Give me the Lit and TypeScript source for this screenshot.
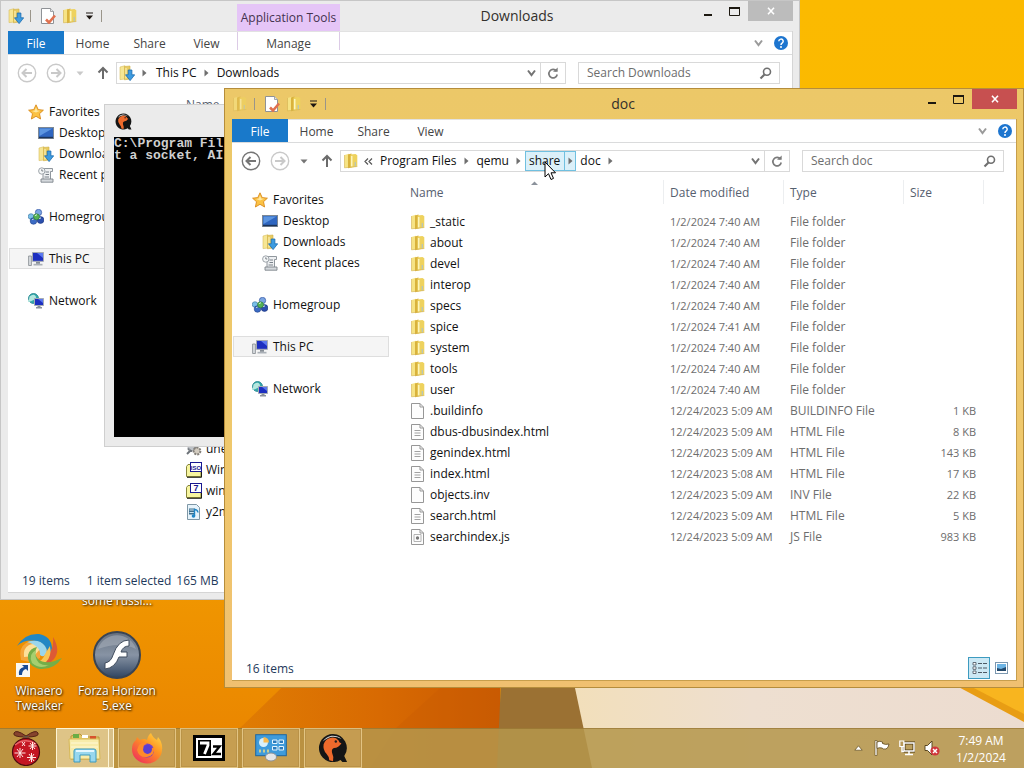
import { LitElement, html, svg, css, nothing, TemplateResult } from "lit";
import { customElement, property } from "lit/decorators.js";
import { classMap } from "lit/directives/class-map.js";

/* ---------- icons ---------- */

const folder = (s = 16) => html`<svg width=${s} height=${s} viewBox="0 0 16 16" aria-hidden="true">
  <path d="M1.500 2 6 .8v13.700l-4.500.3z" fill="#f6e384"/>
  <path d="M5 1.500 8.500.6v14L5 15.300z" fill="#d9b23c"/>
  <path d="M7.500 1.600 12.500 1l1.800 1.200V13.500l-6.800 1.200z" fill="#eed25e"/>
  <path d="M8.700 3v10.500" stroke="#fdf5bb" stroke-width="1.600"/>
  <path d="M12.300 9v4.500" stroke="#b4c4be" stroke-width="1.200"/>
  <path d="M1.500 2v12.800L14.300 13.500" fill="none" stroke="#d3b250" stroke-width=".6"/>
</svg>`;

const downloadFolder = html`<svg width="16" height="16" viewBox="0 0 16 16" aria-hidden="true">
  <path d="M1 2 6 .7V14l-5 .6z" fill="#f6e694" stroke="#d9bd5c" stroke-width=".6"/>
  <path d="M5.500 1.500 11 1v13l-5.500.8z" fill="#e8cb62" stroke="#cfae45" stroke-width=".6"/>
  <path d="M7 3v10.500" stroke="#faf0b4" stroke-width="1.2"/>
  <path d="M9.200 5h3.700v4.800h2.800L11.100 15.600 6.500 9.800h2.700z" fill="#3d9be0" stroke="#1b6cb0" stroke-width=".8"/>
</svg>`;

const checkDoc = html`<svg width="16" height="16" viewBox="0 0 16 16" aria-hidden="true">
  <path d="M1.500.5h9l3 3v12h-12z" fill="#fff" stroke="#8f9296"/>
  <path d="M10.500.5v3h3" fill="#e4e6e8" stroke="#8f9296" stroke-width=".8"/>
  <path d="M6 11.500 9 14.500 15 7.500" fill="none" stroke="#e0714f" stroke-width="2.600"/>
</svg>`;

const qatArrow = html`<svg width="9" height="8" viewBox="0 0 9 8" aria-hidden="true">
  <path d="M1 .5h7v1H1zM1 3.500h7L4.500 7.500z" fill="#1d1712"/>
</svg>`;

const star = html`<svg width="16" height="16" viewBox="0 0 16 16" aria-hidden="true">
  <path d="M8 .8l2.200 4.800 5.200.6-3.900 3.500 1.100 5.300L8 12.300 3.400 15l1.100-5.300L.6 6.200l5.200-.6z" fill="#fbc244" stroke="#d98a1c" stroke-width=".9"/>
  <path d="M8 3.200l1.200 3.200 3 .4-4.200 1.800L4 7l2.800-.6z" fill="#fee7a0"/>
</svg>`;

const desktopIcon = html`<svg width="16" height="16" viewBox="0 0 16 16" aria-hidden="true">
  <rect x=".5" y="2.500" width="15" height="11" fill="#2f66c0" stroke="#7d8894"/>
  <path d="M1.500 3.500h13L1.500 11z" fill="#5c95e0"/>
  <path d="M1 12.500h14" stroke="#1c3358" stroke-width="1.400"/>
</svg>`;

const recent = html`<svg width="16" height="16" viewBox="0 0 16 16" aria-hidden="true">
  <path d="M5 1.500h9.500v3H12.500v9.500H5z" fill="#eef0f2" stroke="#848b92" stroke-width=".9"/>
  <path d="M3 12h12v3.200H3z" fill="#d5d9dd" stroke="#7d848b" stroke-width=".9"/>
  <path d="M7.500 5h3.500M7.500 7.500h3.500M6.500 10h4.500" stroke="#7a828a"/>
  <circle cx="3.800" cy="4" r="3.200" fill="#f5f7f8" stroke="#949ba2" stroke-width=".9"/>
  <path d="M3.800 2.300V4h1.500" fill="none" stroke="#5d656d" stroke-width=".8"/>
</svg>`;

const homegroup = html`<svg width="16" height="16" viewBox="0 0 16 16" aria-hidden="true">
  <circle cx="3" cy="7.500" r="2.800" fill="#79bfe8" stroke="#35729e" stroke-width=".6"/>
  <circle cx="10.500" cy="3.500" r="3.200" fill="#7aa5e2" stroke="#27489b" stroke-width=".6"/>
  <circle cx="12.500" cy="11" r="3.400" fill="#2b4fae" stroke="#183079" stroke-width=".6"/>
  <circle cx="5.500" cy="12" r="3.300" fill="#3c6bc4" stroke="#1f3f8c" stroke-width=".6"/>
  <circle cx="8.500" cy="7.800" r="3" fill="#53b255" stroke="#2a7832" stroke-width=".6"/>
  <path d="M7 7a2 2 0 0 1 2-1.200M11 9.800a2 2 0 0 1 2-.8M4 11a2 2 0 0 1 1.500-.8" stroke="#dff2df" fill="none"/>
</svg>`;

const thisPc = html`<svg width="16" height="16" viewBox="0 0 16 16" aria-hidden="true">
  <path d="M.6 5h2.800v9.500H.6z" fill="#d8dcdf" stroke="#83898e" stroke-width=".8"/>
  <path d="M4.500 1.500h11v8.800h-11z" fill="#1d2fc0" stroke="#a5abb3"/>
  <path d="M9 2h6v5z" fill="#5b78ef"/>
  <path d="M8 10.800h4v2H8z" fill="#868d95"/><path d="M5.500 12.800h9v1.700h-9z" fill="#aab0b7"/>
</svg>`;

const network = html`<svg width="16" height="16" viewBox="0 0 16 16" aria-hidden="true">
  <circle cx="5.500" cy="5.500" r="5" fill="#35a9a9" stroke="#1d7f8c" stroke-width=".8"/>
  <path d="M1.500 3.500q4-3 6-.5T3.500 8 1 6.500z" fill="#b5e7df"/>
  <path d="M6.500 5.500h9v7h-9z" fill="#1d2fc0" stroke="#a5abb3"/>
  <path d="M10 6h5v4z" fill="#5b78ef"/>
  <path d="M9.500 13h3v1h1.500v1.500H8V14h1.500z" fill="#8b929a"/>
</svg>`;

const page = (kind: string) => html`<svg width="16" height="16" viewBox="0 0 16 16" aria-hidden="true">
  <path d="M1.500.5h8.500l3.500 3.500v11.500h-12z" fill="#fdfdfd" stroke="#979797"/>
  <path d="M10 .5V4h3.500" fill="none" stroke="#979797"/>
  ${kind === "html" ? svg`<path d="M4.500 6.500h6M4.500 9h6M4.500 11.500h6" stroke="#a2a2a2"/>` : nothing}
  ${kind === "js" ? svg`<path d="M4 5.500h7v7H4z" fill="none" stroke="#b4b4b4"/><circle cx="7.500" cy="9" r="1.700" fill="#777"/>` : nothing}
</svg>`;

const gears = html`<svg width="16" height="16" viewBox="0 0 16 16" aria-hidden="true">
  <circle cx="6" cy="6" r="4" fill="#bfc3c8" stroke="#74797f" stroke-width="2" stroke-dasharray="2 1"/>
  <circle cx="11" cy="10" r="3.400" fill="#d3ccc0" stroke="#84807a" stroke-width="2" stroke-dasharray="2 1"/>
  <path d="M1 13l4-4" stroke="#6d7278" stroke-width="2"/>
</svg>`;

const archive = (label: string) => html`<svg width="16" height="16" viewBox="0 0 16 16" aria-hidden="true">
  <path d="M.5 4.500 2 2.500h4l1 1.500h8v10.500H.5z" fill="#f7f5a0" stroke="#87853a"/>
  <path d="M1 15.300h14.500V9" fill="none" stroke="#1b1b12"/>
  <rect x="4.500" y=".5" width="11" height="9" fill="#fff" stroke="#191990"/>
  <text x="10" y="8" text-anchor="middle" font-family="Liberation Sans" font-weight="bold" font-size=${label.length > 1 ? 6 : 9} fill="#191990">${label}</text>
</svg>`;

const media = html`<svg width="16" height="16" viewBox="0 0 16 16" aria-hidden="true">
  <path d="M1.500.5h9l3 3v12h-12z" fill="#e6f3fb" stroke="#7e97a6"/>
  <path d="M3 4.500h6v6H3z" fill="#3f6f8c"/><path d="M3.500 6h5M3.500 8.500h5" stroke="#cfe6f2"/>
  <path d="M8.500 12V5.500q3 0 3.500 3" fill="none" stroke="#1f86c6" stroke-width="1.400"/><circle cx="7.500" cy="12" r="1.800" fill="#1f86c6"/>
</svg>`;

const arrowRight = html`<svg width="5" height="8" viewBox="0 0 5 8" aria-hidden="true"><path d="M.5.500 4.500 4 .5 7.500z" fill="#6f6f6f"/></svg>`;
const chevronDown = html`<svg width="9" height="8" viewBox="0 0 9 8" aria-hidden="true"><path d="M1 1.500l3.500 4.500L8 1.500" fill="none" stroke="currentColor" stroke-width="2"/></svg>`;
const refresh = html`<svg width="12" height="13" viewBox="0 0 12 13" aria-hidden="true"><path d="M9.500 4.200A4.200 4.200 0 1 0 10.200 7.500" fill="none" stroke="#7b7b7b" stroke-width="1.700"/><path d="M6 4.800h4.700V.6z" fill="#7b7b7b"/></svg>`;
const magnifier = html`<svg width="13" height="13" viewBox="0 0 13 13" aria-hidden="true"><circle cx="8" cy="4.800" r="3.500" fill="none" stroke="#6f6f6f" stroke-width="1.600"/><path d="M5.500 7.500 1.500 11.500" stroke="#6f6f6f" stroke-width="2.200"/></svg>`;
const circleArrow = (left: boolean) => html`<svg width="20" height="20" viewBox="0 0 20 20" aria-hidden="true">
  <circle cx="10" cy="10" r="8.700" fill="#fff" stroke="currentColor" stroke-width="1.400"/>
  <path d=${left ? "M15 10H6M9.500 6 5.500 10l4 4" : "M5 10h9M10.500 6l4 4-4 4"} fill="none" stroke="currentColor" stroke-width="2"/></svg>`;
const upArrow = html`<svg width="12" height="14" viewBox="0 0 12 14" aria-hidden="true"><path d="M6 13V2.500M1.500 6.500 6 2l4.500 4.500" fill="none" stroke="#6b6b6b" stroke-width="2"/></svg>`;
const help = html`<svg width="14" height="14" viewBox="0 0 14 14" aria-hidden="true"><circle cx="7" cy="7" r="7" fill="#1d75cf"/><path d="M4.800 5.300a2.200 2.200 0 1 1 3.300 1.900Q7 7.900 7 9" fill="none" stroke="#fff" stroke-width="1.500"/><circle cx="7" cy="11" r="1" fill="#fff"/></svg>`;

const qemu = (s: number) => html`<svg width=${s} height=${s} viewBox="0 0 32 32" aria-hidden="true">
  <path d="M16 1a15 15 0 1 0 8 27.700L26 31h5l-3-6.500A15 15 0 0 0 16 1z" fill="#151515"/>
  <path d="M5 9A13 13 0 0 1 25 6.500q-4-2.500-9-2.500T5 9z" fill="#d7d7d7"/>
  <path d="M22 8q-3-4-8-3-6 1-8 7-1 6 3 10 3 3 3 7l4 1q1-5-1-9-1-4 2-5 5 0 8-5l-2-1z" fill="#ee6a2c"/>
  <circle cx="19" cy="9" r="1.300" fill="#222"/>
</svg>`;

const ornament = html`<svg width="30" height="36" viewBox="0 0 30 36" aria-hidden="true">
  <path d="M15 6Q5-1 3 3t12 4q14 0 12-4T15 6z" fill="#86432d" stroke="#562415"/>
  <path d="M12 6h6v4h-6z" fill="#5d5543"/><path d="M14 7l-5 5M16 7l5 5" stroke="#86432d" stroke-width="2"/>
  <circle cx="15" cy="22" r="13.500" fill="#c41623" stroke="#4e0c10" stroke-width="1.200"/>
  <path d="M4 15q10-8 21-1" fill="none" stroke="#e8656a" stroke-width="1.500"/>
  <path d="M6 19l6 8M12 19l-6 8M3.500 23h11M9 18v10M18 24l5 7M23 24l-5 7M16 27.500h9M20.500 23v9M19 13l5 6M24 13l-5 6M17.500 16h8M21.500 12v8M11 12l3 4M14 12l-3 4" stroke="#ffe9e6" stroke-width="1"/>
</svg>`;

const explorerIcon = html`<svg width="34" height="30" viewBox="0 0 34 30" aria-hidden="true">
  <path d="M3 3 12 1l3 3h16v22H3z" fill="#e3c868" stroke="#b99538"/>
  <path d="M5 1h6v4H5z" fill="#69ad45"/><path d="M14 2h6v3h-6z" fill="#fff"/><path d="M22 3h6v3h-6z" fill="#d7522e"/>
  <path d="M1 6h30l1 20H2z" fill="#f8ecaa" stroke="#d6b858"/>
  <path d="M3 10h27M3 14h27" stroke="#fff8d6"/>
  <path d="M6 29V18q0-2 2-2h18q2 0 2 2v11h-6v-7H12v7z" fill="#98d7ee" stroke="#3d99bd"/>
  <path d="M8 18h18" stroke="#e4f7ff" stroke-width="2"/>
</svg>`;

const firefox = html`<svg width="32" height="32" viewBox="0 0 32 32" aria-hidden="true">
  <defs><linearGradient id="ff" x1="1" y1="0" x2=".2" y2="1"><stop offset="0" stop-color="#ffe24a"/><stop offset=".45" stop-color="#ff9422"/><stop offset="1" stop-color="#f0305a"/></linearGradient></defs>
  <path d="M20 1q2 5 6 7l1-3q5 6 4 13a15 14 0 1 1-30-1Q1 11 5 8l1-3 3 3q4-2 7 0 1-5 4-7z" fill="url(#ff)"/>
  <circle cx="16" cy="18.500" r="7" fill="#7541c8"/>
  <path d="M8 13q5-4 8-1-5 1-3 5t10-2q1 9-7 10T6 18z" fill="#ff8a2b"/>
  <circle cx="16.500" cy="17.500" r="4.400" fill="#5b3fd0"/>
</svg>`;

const sevenZip = html`<svg width="32" height="26" viewBox="0 0 32 26" aria-hidden="true">
  <rect x="1.500" y="1.500" width="29" height="23" fill="#fff" stroke="#000" stroke-width="3"/>
  <rect x="5" y="5" width="13" height="16" fill="#000"/>
  <path d="M7 8h8v2.500L11.500 19" fill="none" stroke="#fff" stroke-width="2.800"/>
  <path d="M20 11.500h6.500L20.500 19H28" fill="none" stroke="#000" stroke-width="2.400"/>
</svg>`;

const controlPanel = html`<svg width="32" height="28" viewBox="0 0 32 28" aria-hidden="true">
  <rect x=".7" y=".7" width="30.600" height="21" fill="#3f9bdb" stroke="#1f669f"/>
  <circle cx="8.500" cy="8.500" r="4.500" fill="#d9f0fb"/><path d="M8.500 8.500V3a5.500 5.500 0 0 1 5.500 5.500z" fill="#f9b94c"/>
  <path d="M17.500 6h4.500v3.500h-4.500zM24 6h4.500v3.500H24zM17.500 12.500h4.500V16h-4.500zM24 12.500h4.500V16H24z" fill="#2b7abb" stroke="#e3f4ff"/>
  <path d="M5 15.500v3M9 15.500v3M13 15.500v3" stroke="#f7df80" stroke-width="1.500"/>
  <ellipse cx="16" cy="23" rx="5.500" ry="4" fill="#e5e6e8" stroke="#8e9297"/>
</svg>`;

const winaero = html`<svg width="46" height="46" viewBox="0 0 46 46" aria-hidden="true">
  <path d="M5 27Q2 15 10 10q9-5 15 1l-1 14-10 4z" fill="#f5a63b"/>
  <path d="M8 24q-1-9 5-12 8-3 11 4l-6 7z" fill="#fde09a"/>
  <path d="M1 13Q9 0 23 1q12 2 13 14-1 5-4 6Q30 10 20 8 9 6 1 13z" fill="#2287c4"/>
  <path d="M11 9q12-4 18 4 4 6-1 10-2 1-4-1 1-9-13-13z" fill="#9bd6ec"/>
  <path d="M37 4q8 13 1 22-6 7-14 6 8-4 10-12 4-7 3-16z" fill="#dd5a35"/>
  <path d="M34 13q2 10-4 16-7 5-10 0 7-1 9-8z" fill="#fac554"/>
  <path d="M46 25q-8 12-22 11Q11 33 12 22q2-7 9-8-4 7 1 12 8 7 24-1z" fill="#74ae48"/>
  <path d="M16 30q-4-9 4-13-2 8 3 13 5 3 10 2-9 5-17-2z" fill="#a5cf6f"/>
  <rect x="0" y="30" width="14" height="14" fill="#f8f8f4"/>
  <path d="M3 42q-1-7 5-8l-2-2h6v6l-2-2q-4 1-4 6z" fill="#174b95"/>
</svg>`;

const flash = html`<svg width="48" height="48" viewBox="0 0 48 48" aria-hidden="true">
  <defs><linearGradient id="fl" x1="0" y1="0" x2="0" y2="1"><stop offset="0" stop-color="#66707e"/><stop offset=".5" stop-color="#8793a4"/><stop offset="1" stop-color="#2f4460"/></linearGradient></defs>
  <circle cx="24" cy="24" r="23" fill="url(#fl)" stroke="#394453" stroke-width="2"/>
  <path d="M5 18a20 20 0 0 1 38 0q-16-8-38 0z" fill="#a9b1bc" opacity=".55"/>
  <path d="M36 9v6q-6 0-8 6h6v5h-8q-4 11-14 12v-6q6-1 8-8Q25 9 36 9z" fill="#fff" stroke="#3f4b5c"/>
</svg>`;

/* ---------- data ---------- */

interface Entry { name: string; icon: TemplateResult; date?: string; type?: string; size?: string; }

const dir = (name: string, time = "7:40"): Entry => ({ name, icon: folder(), date: `1/2/2024 ${time} AM`, type: "File folder" });
const file = (name: string, kind: string, type: string, size: string, time = "5:09"): Entry =>
  ({ name, icon: page(kind), date: `12/24/2023 ${time} AM`, type, size });

const docEntries: Entry[] = [
  dir("_static"), dir("about"), dir("devel"), dir("interop"), dir("specs"),
  dir("spice", "7:41"), dir("system"), dir("tools"), dir("user"),
  file(".buildinfo", "plain", "BUILDINFO File", "1 KB"),
  file("dbus-dbusindex.html", "html", "HTML File", "8 KB"),
  file("genindex.html", "html", "HTML File", "143 KB"),
  file("index.html", "html", "HTML File", "17 KB", "5:08"),
  file("objects.inv", "plain", "INV File", "22 KB"),
  file("search.html", "html", "HTML File", "5 KB"),
  file("searchindex.js", "js", "JS File", "983 KB"),
];

const downloadEntries: Entry[] = [
  { name: "une", icon: gears },
  { name: "Win", icon: archive("ISO") },
  { name: "win", icon: archive("7") },
  { name: "y2m", icon: media },
];

/* ---------- explorer window ---------- */

@customElement("explorer-window")
class ExplorerWindow extends LitElement {
  @property() heading = "";
  @property({ type: Boolean, reflect: true }) active = false;
  @property({ type: Boolean }) tools = false;
  @property({ attribute: false }) path: string[] = [];
  @property() hot = "";
  @property({ attribute: false }) entries: Entry[] = [];
  @property({ type: Number }) above = 0;
  @property({ attribute: false }) status: string[] = [];

  static styles = css`
    :host {
      display: flex; flex-direction: column; box-sizing: border-box;
      padding: 0 7px 7px; border: 1px solid #c6c6c6; background: #ebebeb;
      font: 12px/20px "Open Sans", "Noto Sans", sans-serif; color: #1a1a1a;
    }
    :host([active]) { background: linear-gradient(#ecc868, #efc86c 60%, #f0c070); border-color: #b58d3c; }
    button { font: inherit; color: inherit; border: 0; padding: 0; background: none; display: flex; align-items: center; justify-content: center; }
    svg { display: block; flex: none; }
    .title { display: flex; height: 30px; }
    .quick { display: flex; align-items: center; width: 96px; gap: 6px; }
    .quick i { width: 1px; height: 12px; background: #9a958a; margin-right: 3px; }
    .quick .caret { margin: 0 1px; }
    :host([active]) .quick > svg:first-child { opacity: .6; }
    .tools { width: 103px; margin: 3px 0 0 133px; background: #e5c5f7; color: #43324e; text-align: center; line-height: 28px; }
    .heading { flex: 1; margin: 0; text-align: center; font-size: 14px; line-height: 30px; font-weight: 400; color: #33302c; }
    .controls { display: flex; align-items: flex-start; }
    .controls .small { width: 27px; height: 20px; }
    .controls .close { width: 45px; height: 20px; background: #bcbcbc; color: #fff; margin-right: -1px; }
    :host([active]) .close { background: #c75050; }
    .client { flex: 1; display: flex; flex-direction: column; background: #fff; min-height: 0; border: solid #d5d5d5; border-width: 0 1px 1px 0; margin: 0 -1px -1px 0; }
    :host([active]) .client { border-color: #c79e4c; }
    .ribbon { display: flex; height: 24px; border-top: 1px solid #e2e2e2; border-bottom: 1px solid #dadbdc; box-sizing: border-box; }
    .ribbon button { width: 57px; color: #444; padding-top: 2px; }
    .ribbon .file { width: 56px; margin: -1px 0 0; background: #1979ca; color: #fff; }
    .ribbon .manage { width: 103px; margin-left: 2px; height: 18px; padding-top: 6px; box-sizing: border-box; border: solid #dccbe6; border-width: 0 1px; }
    .ribbon .end { margin-left: auto; display: flex; align-items: center; gap: 11px; padding-right: 4px; color: #9a9a9a; }
    .ribbon .end button { width: auto; padding: 0; color: inherit; }
    .bar { display: flex; align-items: center; padding: 7px 12px 8px 9px; color: #757575; }
    .bar .forward, .dim { color: #c9c9c9; }
    .bar .back { margin-right: 9px; }
    .bar .recent { width: 8px; margin: 0 12px 0 10px; }
    .bar .up { width: 14px; margin-right: 6px; }
    .address { flex: 1; display: flex; align-items: stretch; height: 22px; box-sizing: border-box; border: 1px solid #d9d9d9; margin-right: 12px; color: #111; }
    .address .icon { width: 16px; margin: 0 2px; }
    .crumb { display: flex; }
    .crumb button { padding: 0 4px; }
    .crumb .go { padding: 0; width: 12px; }
    .address .lead { width: 15px; }
    .crumb.hot { background: #dbf0f9; box-shadow: inset 0 0 0 1px #70c0e0; }
    .crumb.hot .go { border-left: 1px solid #70c0e0; }
    .more { width: 15px; color: #555; }
    .address .drop { width: 18px; margin-left: auto; color: #737373; }
    .address .reload { width: 25px; border-left: 1px solid #d9d9d9; }
    .search { display: flex; align-items: center; box-sizing: border-box; width: 202px; height: 22px; border: 1px solid #d9d9d9; padding: 0 7px 0 8px; }
    .search input { flex: 1; min-width: 0; border: 0; outline: 0; padding: 0; font: inherit; background: none; }
    .search input::placeholder { color: #6d6d6d; opacity: 1; }
    .body { flex: 1; display: flex; min-height: 0; }
    nav { width: 157px; margin-right: 15px; padding-top: 9px; }
    nav a { display: flex; align-items: center; gap: 5px; height: 21px; padding-left: 19px; margin-left: 1px; color: #111; text-decoration: none; white-space: nowrap; box-sizing: border-box; }
    nav a.sub { padding-left: 29px; }
    nav a.gap { margin-top: 21px; }
    nav a.on { background: #f5f5f5; box-shadow: inset 0 0 0 1px #dedede; }
    table { border-collapse: collapse; table-layout: fixed; width: 580px; align-self: flex-start; white-space: nowrap; }
    th { position: relative; font-weight: 400; text-align: left; vertical-align: top; height: 31px; line-height: 26px; padding: 0 0 0 6px; color: #56606f; background: linear-gradient(#eceef0, #eceef0) right top / 1px 24px no-repeat; box-sizing: border-box; }
    .sort { position: absolute; top: 1px; left: 50%; margin-left: -3px; }
    td { height: 21px; padding: 0 0 0 6px; line-height: 21px; color: #6d6d6d; }
    td.date, td.size { font-size: 11px; }
    td .name { display: flex; align-items: center; gap: 4px; color: #111; }
    td.size { text-align: right; padding-right: 8px; }
    .c1 { width: 260px; } .c2, .c3 { width: 120px; } .c4 { width: 80px; }
    footer { display: flex; align-items: center; height: 24px; padding-left: 14px; gap: 17px; color: #1e395b; line-height: 24px; }
    footer span { padding-top: 2px; }
    footer span + span + span { margin-left: -12px; }
    .views { margin-left: auto; display: flex; align-items: center; padding-right: 4px; }
    .views button { width: 22px; height: 22px; box-sizing: border-box; }
    .views .on { background: #cce8f4; border: 1px solid #3d9bc0; }
  `;

  private crumb(name: string) {
    const hot = name === this.hot;
    return html`<span class=${classMap({ crumb: true, hot })}>
      <button>${name}</button>${this.active || name !== this.heading
        ? html`<button class="go" aria-label="Open submenu">${arrowRight}</button>` : nothing}
    </span>`;
  }

  render() {
    return html`
      <header class="title">
        <div class="quick">
          ${this.active ? folder() : downloadFolder}<i></i>
          ${checkDoc}${folder()}<button class="caret" aria-label="Customize">${qatArrow}</button><i></i>
        </div>
        ${this.tools ? html`<div class="tools">Application Tools</div>` : nothing}
        <h1 class="heading">${this.heading}</h1>
        <div class="controls">
          <button class="small" aria-label="Minimize"><svg width="10" height="14" viewBox="0 0 10 14"><path d="M1 10h8v2H1z" fill="#1c1810"/></svg></button>
          <button class="small" aria-label="Maximize"><svg width="11" height="9" viewBox="0 0 11 9"><path d="M.5 1h10v7.500H.5z" fill="none" stroke="#1c1810"/><path d="M0 0h11v2H0z" fill="#1c1810"/></svg></button>
          <button class="close" aria-label="Close"><svg width="8" height="8" viewBox="0 0 8 8"><path d="M1 .8l6 6.400M7 .8 1 7.200" stroke="currentColor" stroke-width="1.600"/></svg></button>
        </div>
      </header>
      <section class="client">
        <div class="ribbon">
          <button class="file">File</button><button>Home</button><button>Share</button><button>View</button>
          ${this.tools ? html`<button class="manage">Manage</button>` : nothing}
          <div class="end">${chevronDown}<button aria-label="Help">${help}</button></div>
        </div>
        <div class="bar">
          <button class=${this.active ? "back" : "back dim"} aria-label="Back">${circleArrow(true)}</button>
          <button class="forward" aria-label="Forward">${circleArrow(false)}</button>
          <button class=${this.active ? "recent" : "recent dim"} aria-label="Recent locations"><svg width="8" height="5" viewBox="0 0 8 5"><path d="M.5.500h7L4 4.500z" fill="currentColor"/></svg></button>
          <button class="up" aria-label="Up">${upArrow}</button>
          <div class="address">
            <button class="icon" aria-label="Location">${this.active ? folder() : downloadFolder}</button>
            ${this.active ? html`<button class="more" aria-label="Earlier folders"><svg width="9" height="7" viewBox="0 0 9 7"><path d="M4 .5 1 3.500l3 3M8 .5 5 3.500l3 3" fill="none" stroke="currentColor" stroke-width="1.200"/></svg></button>`
              : html`<button class="lead" aria-label="Open submenu">${arrowRight}</button>`}
            ${this.path.map((p) => this.crumb(p))}
            <button class="drop" aria-label="Previous locations">${chevronDown}</button>
            <button class="reload" aria-label="Refresh">${refresh}</button>
          </div>
          <label class="search"><input type="text" placeholder=${`Search ${this.heading}`} aria-label=${`Search ${this.heading}`} />${magnifier}</label>
        </div>
        <div class="body">
          <nav>
            <a href="#">${star}Favorites</a>
            <a href="#" class="sub">${desktopIcon}Desktop</a>
            <a href="#" class="sub">${downloadFolder}Downloads</a>
            <a href="#" class="sub">${recent}Recent places</a>
            <a href="#" class="gap">${homegroup}Homegroup</a>
            <a href="#" class="gap on">${thisPc}This PC</a>
            <a href="#" class="gap">${network}Network</a>
          </nav>
          <table>
            <colgroup><col class="c1" /><col class="c2" /><col class="c3" /><col class="c4" /></colgroup>
            <thead><tr>
              <th>Name<svg class="sort" width="7" height="4" viewBox="0 0 7 4" aria-hidden="true"><path d="M0 4 3.500 .5 7 4z" fill="#8b929b"/></svg></th>
              <th>Date modified</th><th>Type</th><th>Size</th>
            </tr></thead>
            <tbody>
              ${this.above ? html`<tr style="height:${this.above * 21}px"></tr>` : nothing}
              ${this.entries.map((e) => html`<tr>
                <td><span class="name">${e.icon}${e.name}</span></td>
                <td class="date">${e.date}</td><td>${e.type}</td><td class="size">${e.size}</td>
              </tr>`)}
            </tbody>
          </table>
        </div>
        <footer>
          ${this.status.map((s) => html`<span>${s}</span>`)}
          <div class="views">
            <button class="on" aria-label="Details view"><svg width="15" height="14" viewBox="0 0 15 14"><path d="M1 1.500h3v2.500H1zM1 5.800h3v2.500H1zM1 10h3v2.500H1z" fill="#fff" stroke="#55606b" stroke-width=".9"/><path d="M6 2.500h4M11 2.500h4M6 7h4M11 7h4M6 11.500h4M11 11.500h4" stroke="#4d5964"/></svg></button>
            <button aria-label="Thumbnail view"><svg width="13" height="12" viewBox="0 0 13 12"><rect x=".5" y=".5" width="12" height="11" fill="#fff" stroke="#7c98b0"/><path d="M2 2h9v7H2z" fill="#6db4e4"/><path d="M2 9V6l4 1 5-2v4z" fill="#24496a"/></svg></button>
          </div>
        </footer>
      </section>`;
  }
}

/* ---------- console window ---------- */

@customElement("console-window")
class ConsoleWindow extends LitElement {
  static styles = css`
    :host { display: flex; flex-direction: column; box-sizing: border-box; padding: 0 9px 9px; background: #ebebeb; border: 1px solid #cfcfcf; }
    .bar { height: 32px; display: flex; align-items: center; padding-left: 1px; }
    .screen { flex: 1; background: #000; color: #cfcfcf; font: bold 13px/12px "Liberation Mono", monospace; white-space: pre; }
    .screen div { padding-top: 1px; height: 11px; }
  `;
  render() {
    return html`<div class="bar">${qemu(17)}</div>
      <div class="screen"><div>C:\\Program Fil</div><div>t a socket, AI</div></div>`;
  }
}

/* ---------- desktop ---------- */

@customElement("app-root")
class AppRoot extends LitElement {
  static styles = css`
    :host { display: flex; flex-direction: column; position: relative; height: 100vh; overflow: hidden; font: 12px/15px "Open Sans", "Noto Sans", sans-serif; background: #ee9200; }
    .wall { position: absolute; inset: 0; width: 100%; height: 100%; }
    .desk { position: relative; flex: 1; min-height: 0; }
    .shortcut { position: absolute; width: 78px; display: flex; flex-direction: column; align-items: center; gap: 4px; color: #fff; text-align: center; text-decoration: none; text-shadow: 1px 1px 2px #3a2400, 0 0 2px #5c3a00; }
    .s0 { left: 78px; top: 593px; } .s1 { left: 0; top: 631px; } .s2 { left: 78px; top: 631px; }
    .s1 svg { margin-top: 2px; }
    explorer-window, console-window, .pointer { position: absolute; }
    explorer-window { width: 800px; height: 600px; }
    .downloads { left: 0; top: 0; }
    console-window { left: 104px; top: 104px; width: 677px; height: 343px; }
    .doc { left: 224px; top: 88px; }
    .pointer { left: 544px; top: 161px; }
    .taskbar { position: relative; height: 40px; display: flex; background: rgba(180, 150, 76, .86); box-shadow: inset 0 1px rgba(130, 95, 30, .45); }
    button { border: 0; padding: 0; background: none; display: flex; align-items: center; justify-content: center; }
    .start { width: 52px; margin-right: 4px; }
    .app { width: 58px; margin-right: 4px; box-sizing: border-box; border: 1px solid rgba(245, 222, 165, .6); background: rgba(235, 200, 140, .22); box-shadow: inset 0 0 0 1px rgba(120, 85, 25, .15); }
    .app.on { background: rgba(255, 244, 205, .5); border-color: #fdf4d4; box-shadow: inset -4px 0 rgba(190, 155, 85, .6), inset -5px 0 #fdf4d4; }
    .tray { margin-left: auto; display: flex; align-items: center; gap: 9px; }
    .clock { width: 75px; text-align: center; color: #fff; line-height: 17px; padding: 2px 11px 0 0; box-sizing: border-box; }
  `;

  render() {
    return html`
      <svg class="wall" viewBox="0 0 1024 768" preserveAspectRatio="none" aria-hidden="true">
        <defs>
          <linearGradient id="base" x1="0" y1="0" x2="0" y2="1"><stop offset="0" stop-color="#fbba00"/><stop offset=".2" stop-color="#fbb900"/><stop offset=".77" stop-color="#f09600"/><stop offset="1" stop-color="#e98300"/></linearGradient>
          <linearGradient id="deep" x1="0" y1="0" x2="1" y2="0"><stop offset="0" stop-color="#e28103"/><stop offset=".6" stop-color="#d86a02"/><stop offset="1" stop-color="#c95a02"/></linearGradient>
          <linearGradient id="sand" x1="0" y1="0" x2="1" y2="0"><stop offset="0" stop-color="#f2dfba"/><stop offset=".4" stop-color="#eedfd0"/><stop offset="1" stop-color="#ecdcd0"/></linearGradient>
        </defs>
        <rect width="1024" height="768" fill="url(#base)"/>
        <path d="M310 660 240 728 200 768H500V660z" fill="url(#deep)"/>
        <path d="M440 688 396 728 370 768H500V688z" fill="#c95c04" opacity=".35"/>
        <path d="M502 660 497 768H594L572 660z" fill="#9b7133"/>
        <path d="M570 660 575 688 592 768H1024V660z" fill="url(#sand)"/>
        <path d="M908 660 1024 722V660z" fill="#e89d14"/>
        <path d="M920 660 1024 714V660z" fill="#f8b51f"/>
      </svg>
      <main class="desk">
        <a class="shortcut s0" href="#">some russi...</a>
        <a class="shortcut s1" href="#">${winaero}<span>Winaero Tweaker</span></a>
        <a class="shortcut s2" href="#">${flash}<span>Forza Horizon 5.exe</span></a>
        <explorer-window class="downloads" heading="Downloads" tools .path=${["This PC", "Downloads"]}
          .entries=${downloadEntries} .above=${15} .status=${["19 items", "1 item selected", "165 MB"]}></explorer-window>
        <console-window></console-window>
        <explorer-window class="doc" heading="doc" active .path=${["Program Files", "qemu", "share", "doc"]} hot="share"
          .entries=${docEntries} .status=${["16 items"]}></explorer-window>
        <svg class="pointer" width="13" height="20" viewBox="0 0 13 20" aria-hidden="true"><path d="M1 1v15l3.500-3.300L7 18.500l2.500-1.100-2.500-5.600h4.500z" fill="#fff" stroke="#000"/></svg>
      </main>
      <footer class="taskbar">
        <button class="start" aria-label="Start">${ornament}</button>
        <button class="app on" aria-label="File Explorer">${explorerIcon}</button>
        <button class="app" aria-label="Firefox">${firefox}</button>
        <button class="app" aria-label="7-Zip">${sevenZip}</button>
        <button class="app" aria-label="Control Panel">${controlPanel}</button>
        <button class="app" aria-label="QEMU">${qemu(30)}</button>
        <div class="tray">
          <button aria-label="Show hidden icons"><svg width="11" height="6" viewBox="0 0 11 6"><path d="M.8 5.200 4.500.8l3.700 4.400z" fill="#fff" stroke="#5f4a1d" stroke-width=".7"/></svg></button>
          <button aria-label="Action Center"><svg width="16" height="16" viewBox="0 0 16 16"><path d="M1 .5h2v15H1z" fill="#fff" stroke="#5b4518" stroke-width=".6"/><path d="M3 2q3-1.500 5.500 0v1.500q3 1.500 6.500.5-.5 4-3 5-3 .5-4-1-3-.8-5 .5z" fill="#fff" stroke="#5b4518" stroke-width=".8"/></svg></button>
          <button aria-label="Network"><svg width="16" height="16" viewBox="0 0 16 16"><path d="M5 3h10v8H5z" fill="none" stroke="#4d3a14" stroke-width="3"/><path d="M5 3h10v8H5zM10 11v3M6 14.500h8M3 7v4.500h2" fill="none" stroke="#fff" stroke-width="1.500"/><path d="M.8 1h4v5.500h-4z" fill="#b7995a" stroke="#fff" stroke-width="1.200"/></svg></button>
          <button aria-label="Volume"><svg width="16" height="16" viewBox="0 0 16 16"><path d="M1 5.500h2.500L8 1v14l-4.500-4.500H1z" fill="#fff" stroke="#4d3a14" stroke-width=".9"/><circle cx="11" cy="11" r="4.600" fill="#d0363c"/><path d="M9 9l4 4M13 9l-4 4" stroke="#fff" stroke-width="1.500"/></svg></button>
          <div class="clock">7:49 AM<br />1/2/2024</div>
        </div>
      </footer>`;
  }
}
